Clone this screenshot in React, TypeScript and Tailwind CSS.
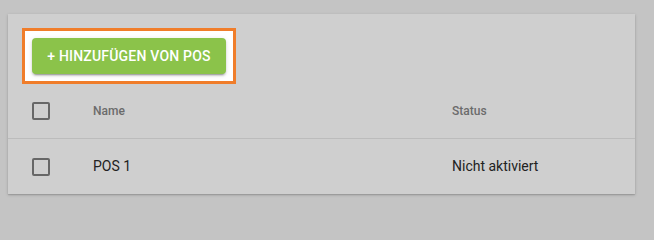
import React from "react";

function Box() {
  return <div className="w-[18px] h-[18px] border-2 border-[#676767] rounded-[2px]" />;
}

export default function App() {
  return (
    <div
      className="w-[654px] h-[209px] min-h-screen bg-[#c4c4c4] pt-[14px] pl-2"
      style={{ fontFamily: "Roboto, 'Liberation Sans', sans-serif" }}
    >
      <div className="w-[627px] h-[180px] bg-[#cfcfcf] shadow-[0_1px_3px_rgba(0,0,0,0.18),0_1px_1px_rgba(0,0,0,0.1)] flex flex-col">
        <div className="pt-[14px] pl-[14px]">
          <div className="w-[214px] h-[56px] border-[3px] border-[#f07d2a] bg-white p-[7px]">
            <div className="w-[194px] h-[36px] rounded-[4px] bg-[#8bc34a] shadow-[0_3px_1px_-2px_rgba(0,0,0,0.2),0_2px_2px_0_rgba(0,0,0,0.14),0_1px_5px_0_rgba(0,0,0,0.12)] flex items-center justify-center text-white text-[14px] font-medium tracking-[0.2px] uppercase">
              + Hinzufügen von POS
            </div>
          </div>
        </div>
        <div className="h-[55px] shrink-0 flex items-center border-b border-[#bcbcbc]">
          <div className="pl-6 w-[85px]">
            <Box />
          </div>
          <div className="w-[359px] text-[12px] font-medium text-[#6b6b6b]">Name</div>
          <div className="text-[12px] font-medium text-[#6b6b6b]">Status</div>
        </div>
        <div className="h-[55px] shrink-0 flex items-center">
          <div className="pl-6 w-[85px]">
            <Box />
          </div>
          <div className="w-[359px] text-[14px] text-[#222]">POS 1</div>
          <div className="text-[14px] text-[#222]">Nicht aktiviert</div>
        </div>
      </div>
    </div>
  );
}
